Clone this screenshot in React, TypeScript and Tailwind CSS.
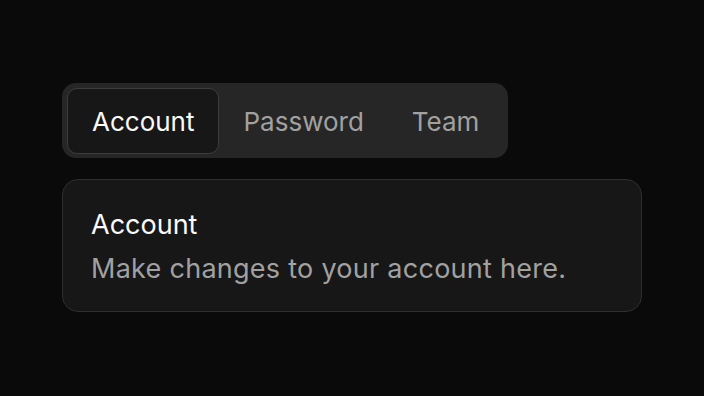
import React, { useState } from "react";

export default function App() {
  const [tab, setTab] = useState("Account");
  const tabs = ["Account", "Password", "Team"];
  return (
    <div
      className="w-[704px] h-[396px] bg-[#0a0a0a] pt-[83px] pl-[62px]"
      style={{ fontFamily: "Inter, 'Noto Sans', sans-serif" }}
    >
      <div className="flex flex-col gap-[21px] w-[580px]">
        <div className="self-start flex items-center w-[446px] h-[75px] p-[5px] rounded-[14px] bg-[#262626]">
          {tabs.map((t) => (
            <button
              key={t}
              onClick={() => setTab(t)}
              className={
                t === tab
                  ? "h-[66px] px-[24px] pt-[3px] rounded-[10px] bg-[#171717] border border-[#3d3d3d] text-[26px] leading-[36px] text-[#fafafa]"
                  : "h-[66px] px-[23px] pt-[3px] rounded-[10px] border border-transparent text-[26px] leading-[36px] text-[#a1a1a1]"
              }
            >
              {t}
            </button>
          ))}
        </div>
        <div className="h-[133px] rounded-[16px] bg-[#171717] border border-[#2e2e2e] px-[28px] pt-[27px]">
          <div className="text-[27px] leading-[36px] text-[#fafafa]">Account</div>
          <div className="text-[27px] leading-[36px] mt-[8px] tracking-[0.01em] text-[#a1a1a1]">
            Make changes to your account here.
          </div>
        </div>
      </div>
    </div>
  );
}
